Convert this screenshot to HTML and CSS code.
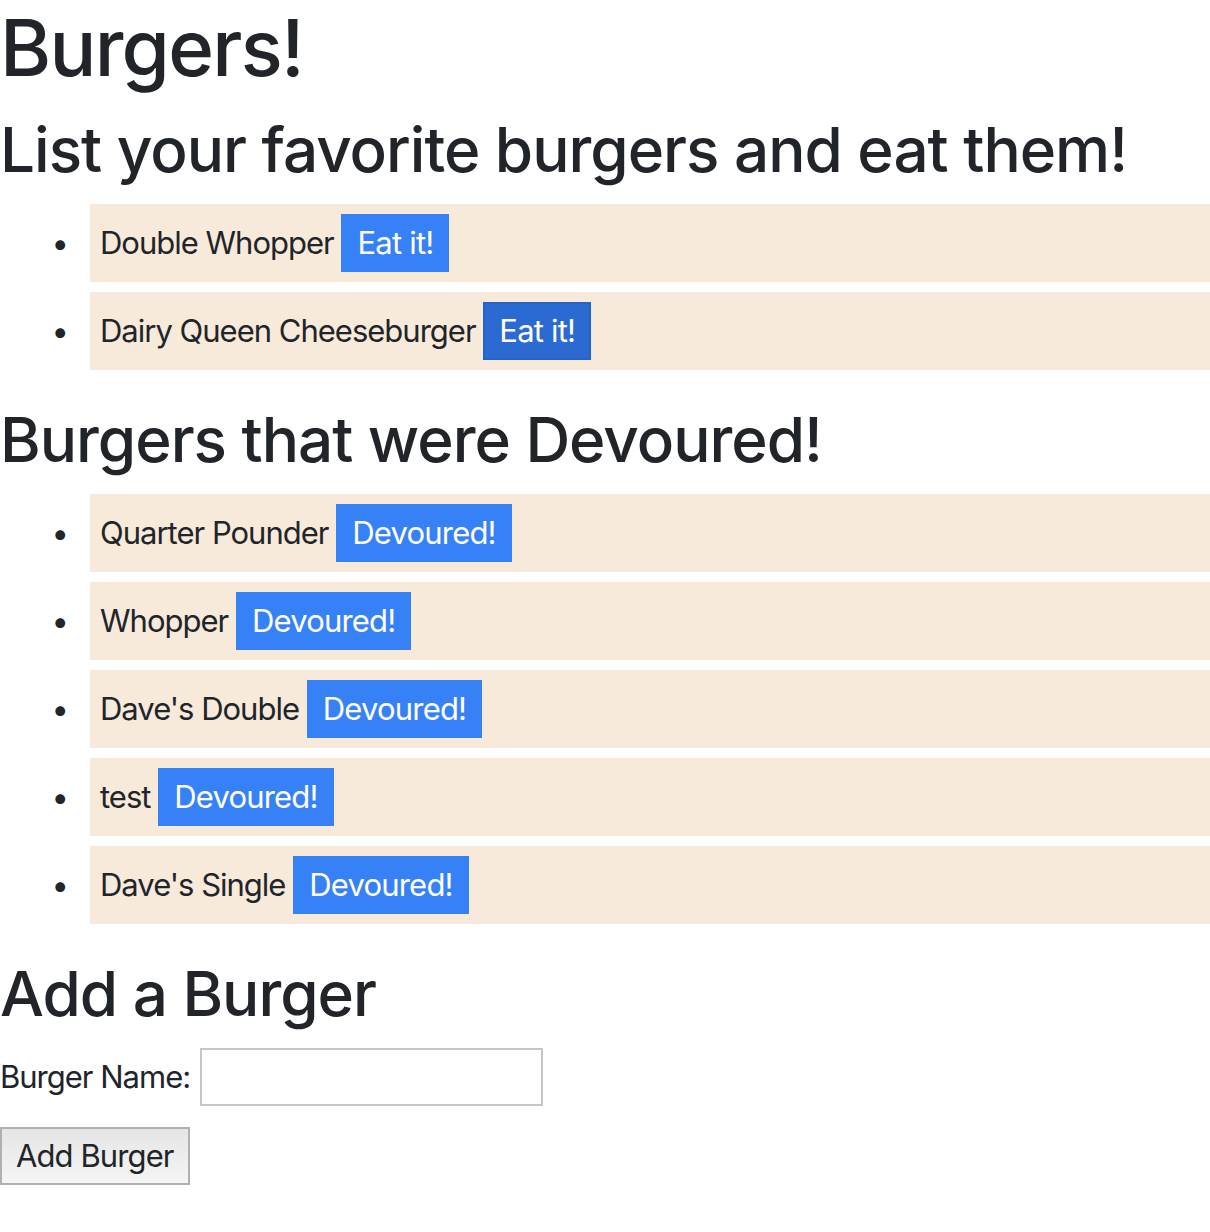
FILE: index.html
```html
<!DOCTYPE html>
<html lang="en">
<head>
<meta charset="utf-8">
<title>Burgers!</title>
<link rel="stylesheet" href="styles.css">
</head>
<body>
<h1 class="title">Burgers!</h1>
<h2 class="heading">List your favorite burgers and eat them!</h2>
<ul class="burger-list">
  <li class="burger">Double Whopper <button class="btn">Eat it!</button></li>
  <li class="burger">Dairy Queen Cheeseburger <button class="btn btn-active">Eat it!</button></li>
</ul>
<h2 class="heading">Burgers that were Devoured!</h2>
<ul class="burger-list">
  <li class="burger">Quarter Pounder <button class="btn">Devoured!</button></li>
  <li class="burger">Whopper <button class="btn">Devoured!</button></li>
  <li class="burger">Dave's Double <button class="btn">Devoured!</button></li>
  <li class="burger">test <button class="btn">Devoured!</button></li>
  <li class="burger">Dave's Single <button class="btn">Devoured!</button></li>
</ul>
<h2 class="heading">Add a Burger</h2>
<form class="add-form">
  <div class="form-row">
    <label class="form-label" for="burger-name">Burger Name:</label>
    <input class="form-input" id="burger-name" type="text">
  </div>
  <button class="add-btn" type="submit">Add Burger</button>
</form>
</body>
</html>
```
FILE: styles.css
```css
html, body {
  margin: 0;
  padding: 0;
}
body {
  font-family: Inter, "Noto Sans", sans-serif;
  font-size: 31px;
  line-height: 48px;
  color: #212529;
  background: #fff;
  letter-spacing: -1px;
}
.title {
  font-size: 78px;
  font-weight: 500;
  line-height: 96px;
  margin: 0 0 16px;
  letter-spacing: -1.75px;
}
.heading {
  font-size: 62px;
  font-weight: 500;
  line-height: 76px;
  margin: 0 0 16px;
  letter-spacing: -1px;
}
.burger-list {
  margin: 0 0 32px;
  padding-left: 90px;
}
.burger {
  background: #f7eada;
  padding: 10px 10px;
  margin-bottom: 10px;
  line-height: 58px;
  height: 58px;
}
.burger::marker {
  content: "\2022\00a0\00a0\00a0";
}
.btn {
  font-family: inherit;
  font-size: 31px;
  line-height: 38px;
  padding: 10px 16px;
  border: 0;
  background: #3781f6;
  color: #fff;
  vertical-align: top;
  letter-spacing: -0.8px;
  border-radius: 0;
  cursor: pointer;
}
.btn-active {
  background: #2b69d3;
  box-shadow: inset 0 0 0 2px #2762c8;
}
.add-form {
  margin: 0;
}
.form-row {
  display: flex;
  align-items: center;
  gap: 10px;
  margin-bottom: 21px;
}
.form-input {
  width: 343px;
  height: 58px;
  box-sizing: border-box;
  border: 2px solid #c6c6c6;
  font-family: inherit;
  font-size: 31px;
  padding: 2px 4px;
}
.add-btn {
  font-family: inherit;
  font-size: 31px;
  line-height: 48px;
  height: 58px;
  padding: 0 14px;
  border: 2px solid #b0b0b0;
  border-radius: 0;
  background: linear-gradient(#e5e5e5, #f5f5f5);
  color: #212529;
  letter-spacing: -0.9px;
}
```
